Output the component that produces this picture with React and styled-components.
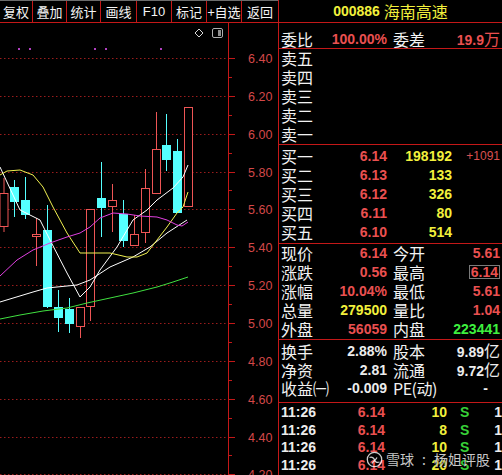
import React from 'react';
import styled, { createGlobalStyle } from 'styled-components';

const Global = createGlobalStyle`
  html, body { margin: 0; padding: 0; background: #000; }
  body { width: 502px; height: 475px; overflow: hidden; font-family: "Liberation Sans", Arial, sans-serif; }
`;

const CJK = `"Noto Sans CJK SC", "Noto Sans", sans-serif`;
const NUM = `"Liberation Sans", Arial, sans-serif`;

const C = {
  line: '#c41818',
  label: '#f2f2f2',
  red: '#ea5050',
  yellow: '#f2f03c',
  green: '#3ef03e',
  white: '#ececec',
};

const Screen = styled.div`
  position: relative;
  display: flex;
  width: 502px;
  height: 475px;
  background: #000;
  overflow: hidden;
`;

const LeftCol = styled.div`
  width: 278px;
  display: flex;
  flex-direction: column;
`;

const Toolbar = styled.div`
  display: flex;
  height: 21px;
  border-top: 1px solid #6c6c6c;
  border-bottom: 1px solid ${C.line};
`;

const ToolButton = styled.div`
  width: ${(p) => p.$w}px;
  flex: none;
  border-right: ${(p) => (p.$last ? 'none' : `1px solid ${C.line}`)};
  color: #f4f4f4;
  font-family: ${(p) => (p.$latin ? NUM : CJK)};
  font-size: 13px;
  line-height: 21px;
  text-align: center;
  white-space: nowrap;
`;

const ChartBox = styled.div`
  flex: 1;
  position: relative;
`;

const ChartSvg = styled.svg`
  display: block;
  width: 278px;
  height: 452px;
`;

const Panel = styled.div`
  flex: 1;
  display: flex;
  flex-direction: column;
  border-left: 1px solid ${C.line};
`;

const Header = styled.div`
  height: 22px;
  border-bottom: 1px solid ${C.line};
  display: flex;
  align-items: center;
  justify-content: center;
  gap: 4px;
  color: ${C.yellow};
`;

const Code = styled.span`
  font-family: ${NUM};
  font-weight: bold;
  font-size: 14px;
`;

const Name = styled.span`
  font-family: ${CJK};
  font-size: 16px;
  line-height: 22px;
`;

const Section = styled.div`
  padding-top: ${(p) => p.$pt || 0}px;
  padding-bottom: ${(p) => p.$pb || 0}px;
  border-bottom: ${(p) => (p.$noBorder ? 'none' : `1px solid ${C.line}`)};
`;

const Grid = styled.div`
  display: grid;
  grid-template-columns: ${(p) => p.$cols};
  padding-left: 2px;
  height: ${(p) => p.$h || 19}px;
  align-items: center;
`;

const Label = styled.span`
  font-family: ${CJK};
  font-size: 16px;
  line-height: 19px;
  color: ${C.label};
  white-space: nowrap;
  letter-spacing: ${(p) => p.$ls || 0}px;
`;

const Num = styled.span`
  font-family: ${NUM};
  font-weight: ${(p) => (p.$light ? 'normal' : 'bold')};
  font-size: ${(p) => p.$size || 14}px;
  color: ${(p) => p.$color || C.white};
  text-align: ${(p) => p.$align || 'right'};
  padding-left: ${(p) => p.$pl || 0}px;
  padding-right: ${(p) => p.$pr || 0}px;
  white-space: nowrap;
  line-height: 19px;
`;

const Unit = styled.span`
  font-family: ${CJK};
  font-weight: normal;
  font-size: 16px;
`;

const Boxed = styled.span`
  border: 1px solid #7a7a7a;
  padding: 0 1px;
  line-height: 12px;
  display: inline-block;
`;

const Watermark = styled.div`
  position: absolute;
  left: 366px;
  top: 451px;
  display: flex;
  align-items: center;
  gap: 3px;
  color: rgba(255, 255, 255, 0.78);
  font-family: ${CJK};
  font-size: 14px;
  line-height: 17px;
  text-shadow: 0 0 2px rgba(0, 0, 0, 0.9);
  pointer-events: none;
`;

const WmColon = styled.span`
  margin: 0 5px;
`;

/* ---------- chart data ---------- */
const yOf = (p) => 58 + ((6.4 - p) / 0.2) * 37.85;
const gridPrices = [6.4, 6.2, 6.0, 5.8, 5.6, 5.4, 5.2, 5.0, 4.8, 4.6, 4.4, 4.2];

const candles = [
  [4, 178, 193, 227, 232, 'r'],
  [14.5, 180, 187, 202, 217, 'c'],
  [25.5, 177, 200, 215, 219, 'c'],
  [36.5, 218, 234, 237, 266, 'r'],
  [47.5, 205, 230, 307, 308, 'c'],
  [58.5, 290, 307, 318, 332, 'c'],
  [69.5, 298, 309, 324, 333, 'c'],
  [80.5, 307, 307, 327, 338, 'r'],
  [90.5, 209, 209, 307, 321, 'r'],
  [101.5, 162, 198, 208, 237, 'c'],
  [112.5, 184, 200, 207, 232, 'r'],
  [123.5, 200, 214, 241, 247, 'c'],
  [134.5, 215, 234, 246, 246, 'r'],
  [145.5, 169, 188, 233, 243, 'r'],
  [156.5, 112, 149, 194, 194, 'r'],
  [166.5, 114, 145, 160, 171, 'c'],
  [177.5, 139, 151, 213, 213, 'c'],
  [188.5, 107, 107, 207, 207, 'r'],
];

const maLines = [
  {
    color: '#ffffff',
    pts: [[0, 167], [20, 210], [30, 215], [40, 220], [50, 240], [67, 273], [80, 297], [90, 287], [100, 270], [117, 247], [133, 220], [147, 210], [157, 200], [173, 188], [183, 177], [188, 165]],
  },
  {
    color: '#ffffff',
    pts: [[0, 302], [33, 292], [47, 288], [77, 285], [90, 280], [110, 267], [133, 257], [150, 247], [167, 233], [187, 220]],
  },
  {
    color: '#f0f050',
    pts: [[0, 175], [7, 171], [20, 170], [33, 175], [43, 187], [53, 207], [67, 233], [80, 253], [97, 253], [110, 253], [127, 257], [137, 257], [147, 253], [157, 240], [167, 227], [177, 213], [183, 207], [188, 192]],
  },
  {
    color: '#e040e0',
    pts: [[0, 276], [17, 260], [33, 250], [50, 243], [67, 237], [80, 233], [90, 227], [100, 218], [113, 213], [127, 214], [140, 216], [157, 217], [167, 220], [177, 225], [182, 226], [188, 222]],
  },
  {
    color: '#40e040',
    pts: [[0, 319], [20, 315], [43, 311], [67, 308], [87, 303], [110, 298], [133, 293], [157, 287], [173, 282], [188, 277]],
  },
];

const dots = [18, 29, 94, 105, 160];

function Chart() {
  return (
    <ChartSvg viewBox="0 23 278 452">
      {gridPrices.map((p) => {
        const y = Math.round(yOf(p)) + 0.5;
        return (
          <g key={p}>
            <line x1="0" x2="228" y1={y} y2={y} stroke="#9a1c1c" strokeDasharray="1.5 2.5" />
            <line x1="228" x2="235" y1={y} y2={y} stroke="#c41818" />
            <text x="248" y={y + 4.5} fill="#d44848" fontFamily={NUM} fontSize="12.5">
              {p.toFixed(2)}
            </text>
          </g>
        );
      })}
      {gridPrices.map((p) => {
        const y = Math.round(yOf(p) + 37.85 / 2) + 0.5;
        return <line key={'m' + p} x1="228" x2="232" y1={y} y2={y} stroke="#c41818" />;
      })}
      <line x1="228.5" x2="228.5" y1="23" y2="475" stroke="#c41818" />

      {dots.map((x) => (
        <rect key={x} x={x} y="48" width="2" height="2" fill="#b040c0" />
      ))}

      <polygon points="199,29 203,33 199,37 195,33" fill="none" stroke="#d8d8d8" />
      <rect x="212.5" y="28.5" width="10" height="9" rx="1.5" fill="none" stroke="#b0b0b0" />
      <rect x="218" y="30" width="3" height="6" fill="#909090" />

      {candles.map(([cx, wt, bt, bb, wb, t], i) => {
        if (t === 'c') {
          return (
            <g key={i}>
              <line x1={cx} x2={cx} y1={wt} y2={wb} stroke="#55ffff" />
              <rect x={cx - 4.5} y={bt} width="9" height={Math.max(bb - bt, 1)} fill="#55ffff" />
            </g>
          );
        }
        return (
          <g key={i}>
            {wt < bt && <line x1={cx} x2={cx} y1={wt} y2={bt} stroke="#ee5555" />}
            {wb > bb && <line x1={cx} x2={cx} y1={bb} y2={wb} stroke="#ee5555" />}
            <rect x={cx - 4} y={bt + 0.5} width="8" height={Math.max(bb - bt - 1, 1)} fill="#000" stroke="#ee5555" />
          </g>
        );
      })}

      {maLines.map((m, i) => (
        <polyline key={i} points={m.pts.map((p) => p.join(',')).join(' ')} fill="none" stroke={m.color} strokeWidth="1" />
      ))}
    </ChartSvg>
  );
}

/* ---------- panel data ---------- */
const COLS4 = '40px 66px 6px 40px 67px';
const COLSBOOK = '40px 66px 65px 48px';
const COLSTRADE = '50px 54px 62px 33px 1fr';

const sells = ['卖五', '卖四', '卖三', '卖二', '卖一'];
const buys = [
  ['买一', '6.14', '198192', '+1091'],
  ['买二', '6.13', '133', ''],
  ['买三', '6.12', '326', ''],
  ['买四', '6.11', '80', ''],
  ['买五', '6.10', '514', ''],
];

const quotes = [
  ['现价', '6.14', C.red, '今开', '5.61', C.red],
  ['涨跌', '0.56', C.red, '最高', '6.14', C.red, true],
  ['涨幅', '10.04%', C.red, '最低', '5.61', C.red],
  ['总量', '279500', C.yellow, '量比', '1.04', C.red],
  ['外盘', '56059', C.red, '内盘', '223441', C.green],
];

const trades = [
  ['11:26', '6.14', '10'],
  ['11:26', '6.14', '8'],
  ['11:26', '6.14', '10'],
  ['11:26', '6.14', '20'],
];

const tools = [
  ['复权', 32],
  ['叠加', 33],
  ['统计', 33],
  ['画线', 35],
  ['F10', 34, true],
  ['标记', 34],
  ['+自选', 34],
  ['返回', 36],
];

function XueqiuLogo() {
  return (
    <svg width="17" height="17" viewBox="0 0 17 17">
      <circle cx="8.5" cy="8.5" r="7.2" fill="none" stroke="rgba(255,255,255,0.8)" strokeWidth="1.3" />
      <path d="M3.5 6.5 C6 5.5 8 7 8.5 9 C9 11 11 12 13.5 11" fill="none" stroke="rgba(255,255,255,0.8)" strokeWidth="1.3" />
      <path d="M6 12.5 C7 10.5 9.5 9.5 11 6.5" fill="none" stroke="rgba(255,255,255,0.8)" strokeWidth="1.3" />
    </svg>
  );
}

export default function App() {
  return (
    <>
      <Global />
      <Screen>
        <LeftCol>
          <Toolbar>
            {tools.map(([t, w, latin], i) => (
              <ToolButton key={t} $w={w} $latin={latin} $last={i === tools.length - 1}>
                {t}
              </ToolButton>
            ))}
          </Toolbar>
          <ChartBox>
            <Chart />
          </ChartBox>
        </LeftCol>

        <Panel>
          <Header>
            <Code>000886</Code>
            <Name>海南高速</Name>
          </Header>

          <Section $pt={6}>
            <Grid $cols={COLS4}>
              <Label>委比</Label>
              <Num $color={C.red}>100.00%</Num>
              <span />
              <Label>委差</Label>
              <Num $color={C.red}>
                19.9<Unit>万</Unit>
              </Num>
            </Grid>
          </Section>

          <Section>
            {sells.map((s) => (
              <Grid key={s} $cols={COLSBOOK}>
                <Label>{s}</Label>
              </Grid>
            ))}
          </Section>

          <Section $pt={2} $pb={1}>
            {buys.map(([l, p, v, d]) => (
              <Grid key={l} $cols={COLSBOOK}>
                <Label>{l}</Label>
                <Num $color={C.red}>{p}</Num>
                <Num $color={C.yellow}>{v}</Num>
                <Num $light $size={12} $color="#d85050">
                  {d}
                </Num>
              </Grid>
            ))}
          </Section>

          <Section>
            {quotes.map(([l1, v1, c1, l2, v2, c2, boxed]) => (
              <Grid key={l1} $cols={COLS4}>
                <Label>{l1}</Label>
                <Num $color={c1}>{v1}</Num>
                <span />
                <Label>{l2}</Label>
                <Num $color={c2}>{boxed ? <Boxed>{v2}</Boxed> : v2}</Num>
              </Grid>
            ))}
          </Section>

          <Section $pt={1} $pb={4}>
            <Grid $cols={COLS4}>
              <Label>换手</Label>
              <Num>2.88%</Num>
              <span />
              <Label>股本</Label>
              <Num>
                9.89<Unit>亿</Unit>
              </Num>
            </Grid>
            <Grid $cols={COLS4}>
              <Label>净资</Label>
              <Num>2.81</Num>
              <span />
              <Label>流通</Label>
              <Num>
                9.72<Unit>亿</Unit>
              </Num>
            </Grid>
            <Grid $cols={COLS4}>
              <Label>收益㈠</Label>
              <Num>-0.009</Num>
              <span />
              <Label $ls={-0.5}>PE(动)</Label>
              <Num $pr={12}>-</Num>
            </Grid>
          </Section>

          <Section $noBorder>
            {trades.map(([t, p, v], i) => (
              <Grid key={i} $cols={COLSTRADE} $h={17.6}>
                <Num $align="left">{t}</Num>
                <Num $color={C.red}>{p}</Num>
                <Num $color={C.yellow}>{v}</Num>
                <Num $align="left" $pl={13} $color="#38d038">
                  S
                </Num>
                <Num>1</Num>
              </Grid>
            ))}
          </Section>
        </Panel>

        <Watermark>
          <XueqiuLogo />
          <span>雪球</span>
          <WmColon>:</WmColon>
          <span>杨姐评股</span>
        </Watermark>
      </Screen>
    </>
  );
}
